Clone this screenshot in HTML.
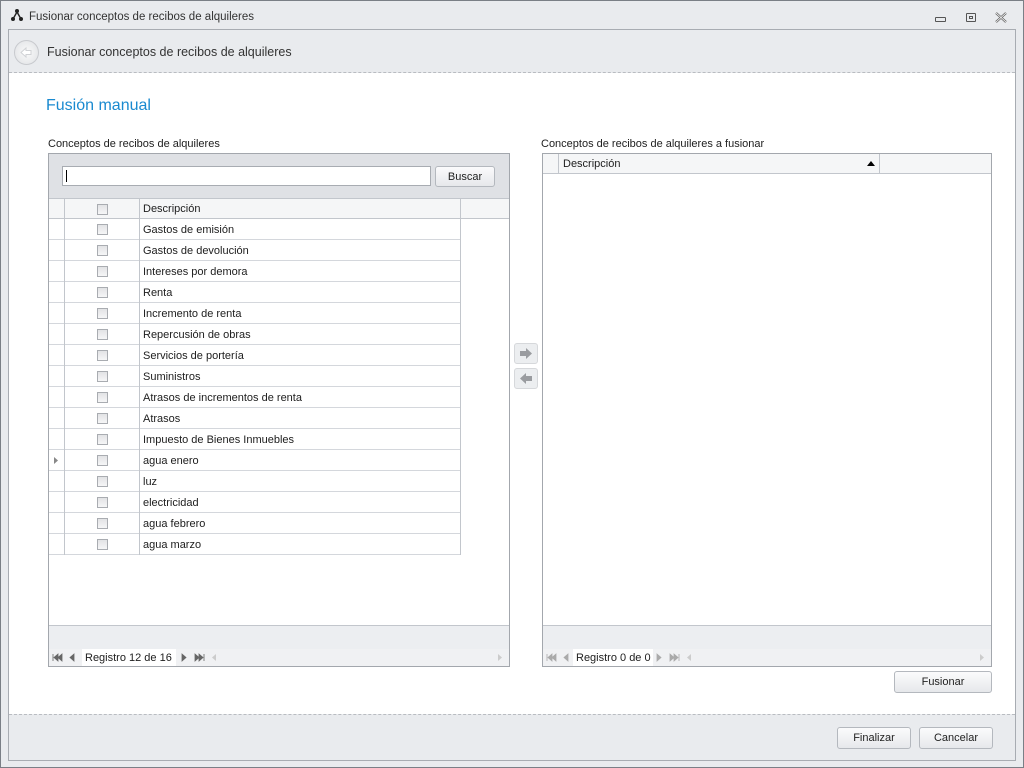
<!DOCTYPE html>
<html><head><meta charset="utf-8"><style>
*{box-sizing:border-box;margin:0;padding:0}
body{width:1024px;height:768px;background:#e9ebee;font-family:"Liberation Sans",sans-serif;font-size:11px;color:#202020;position:relative;overflow:hidden}
.abs{position:absolute}
.win{left:0;top:0;width:1024px;height:768px;border:1px solid #7a7f86}
.inner{left:8px;top:29px;width:1008px;height:732px;border:1px solid #a8acb2;background:#fff}
.btn{position:absolute;border:1px solid #b4b8be;border-radius:3px;background:linear-gradient(#fbfbfc,#e6e8eb);text-align:center;font-size:11px;line-height:20px;color:#222}
.cb{position:absolute;width:11px;height:11px;border:1px solid #a9acb1;background:linear-gradient(#e2e3e5,#f6f6f7)}
.row{position:absolute;left:0;height:21px;border-bottom:1px solid #d4d7dc;width:412px}
.vl{position:absolute;width:1px;background:#c2c6cc}
</style></head><body>
<div class="abs win"></div>
<svg class="abs" style="left:10px;top:8px" width="14" height="14" viewBox="0 0 14 14"><circle cx="7" cy="3" r="2" fill="#222"/><circle cx="3" cy="11" r="2" fill="#222"/><circle cx="11" cy="11" r="2" fill="#222"/><path d="M7 4 L3 11 M7 4 L11 11" stroke="#222" stroke-width="1.4"/></svg>
<div class="abs" style="left:29px;top:11px;font-size:11.5px;color:#333">Fusionar conceptos de recibos de alquileres</div>
<div class="abs" style="left:935px;top:17px;width:11px;height:5px;border:1px solid #555;border-radius:1px"></div>
<div class="abs" style="left:966px;top:13px;width:10px;height:9px;border:1px solid #555;border-radius:1px"><div style="margin:2px 2px;width:4px;height:3px;border:1px solid #555"></div></div>
<svg class="abs" style="left:995px;top:12px" width="12" height="11" viewBox="0 0 12 11"><path d="M1 1 L11 10 M11 1 L1 10" stroke="#666" stroke-width="2.2"/><path d="M1 1 L11 10 M11 1 L1 10" stroke="#fff" stroke-width="0.8"/></svg>
<div class="abs inner"></div>
<div class="abs" style="left:9px;top:30px;width:1006px;height:43px;background:#e9ebee;border-bottom:1px dashed #b9bcc1"></div>
<div class="abs" style="left:14px;top:40px;width:25px;height:25px;border-radius:50%;border:1px solid #c8cace;background:radial-gradient(#fafafa,#dfe1e4)"><svg width="23" height="23" viewBox="0 0 23 23"><path d="M6 11.5 L11 7 L11 9.5 L16 9.5 L16 13.5 L11 13.5 L11 16 Z" fill="#fff" stroke="#d0d2d5"/></svg></div>
<div class="abs" style="left:47px;top:45px;font-size:12.5px;color:#333">Fusionar conceptos de recibos de alquileres</div>
<div class="abs" style="left:46px;top:97px;font-size:16px;color:#1a8ad0">Fusión manual</div>
<div class="abs" style="left:48px;top:138px">Conceptos de recibos de alquileres</div>
<div class="abs" style="left:541px;top:138px">Conceptos de recibos de alquileres a fusionar</div>

<!-- left grid -->
<div class="abs" style="left:48px;top:153px;width:462px;height:514px;border:1px solid #a3a7ad;background:#fff;overflow:hidden">
 <div class="abs" style="left:0;top:0;width:460px;height:45px;background:#dfe1e5;border-bottom:1px solid #c2c6cc"></div>
 <div class="abs" style="left:13px;top:12px;width:369px;height:20px;border:1px solid #a8acb2;background:#fff"><div style="margin:3px 0 0 3px;width:1px;height:12px;background:#000"></div></div>
 <div class="btn" style="left:386px;top:12px;width:60px;height:21px">Buscar</div>
 <div class="abs" style="left:0;top:45px;width:460px;height:20px;background:#f5f6f7;border-bottom:1px solid #c2c6cc"></div>
 <div class="cb" style="left:48px;top:50px"></div>
 <div class="abs" style="left:94px;top:49px">Descripción</div>
 <div id="rows"></div>
 <div class="abs" style="left:0;top:471px;width:460px;height:24px;background:#eceef1;border-top:1px solid #c2c6cc"></div>
 <div class="abs" style="left:0;top:495px;width:460px;height:17px;background:#f0f1f3"></div>
 <svg class="abs" style="left:3px;top:499px" width="26" height="9"><path d="M1 1V8M6 1L2 4.5L6 8ZM10 1L6 4.5L10 8Z M22 1L18 4.5L22 8Z" fill="#666" stroke="#666" stroke-width="0.8"/></svg>
 <div class="abs" style="left:33px;top:495px;width:94px;height:17px;background:#fff"></div>
 <div class="abs" style="left:36px;top:498px">Registro 12 de 16</div>
 <svg class="abs" style="left:130px;top:499px" width="40" height="9"><path d="M3 1L7 4.5L3 8Z M16 1L20 4.5L16 8Z M20 1L24 4.5L20 8Z M25 1V8" fill="#666" stroke="#666" stroke-width="0.8"/><path d="M37 1L33 4.5L37 8Z" fill="#ccc"/></svg>
 <svg class="abs" style="left:447px;top:499px" width="8" height="9"><path d="M2 1L6 4.5L2 8Z" fill="#ccc"/></svg>
</div>

<!-- arrows -->
<div class="abs" style="left:514px;top:343px;width:24px;height:21px;border:1px solid #d6d8db;border-radius:3px;background:#eceef0"><svg width="22" height="19"><path d="M5 7 H11 V4 L17 9.5 L11 15 V12 H5 Z" fill="#9a9ca0"/></svg></div>
<div class="abs" style="left:514px;top:368px;width:24px;height:21px;border:1px solid #d6d8db;border-radius:3px;background:#eceef0"><svg width="22" height="19"><path d="M17 7 H11 V4 L5 9.5 L11 15 V12 H17 Z" fill="#9a9ca0"/></svg></div>

<!-- right grid -->
<div class="abs" style="left:542px;top:153px;width:450px;height:514px;border:1px solid #a3a7ad;background:#fff;overflow:hidden">
 <div class="abs" style="left:0;top:0;width:448px;height:20px;background:#f5f6f7;border-bottom:1px solid #c2c6cc"></div>
 <div class="vl" style="left:15px;top:0;height:20px"></div>
 <div class="vl" style="left:336px;top:0;height:20px"></div>
 <div class="abs" style="left:20px;top:4px">Descripción</div>
 <svg class="abs" style="left:324px;top:7px" width="8" height="5"><path d="M0 5L4 0L8 5Z" fill="#000"/></svg>
 <div class="abs" style="left:0;top:471px;width:448px;height:24px;background:#eceef1;border-top:1px solid #c2c6cc"></div>
 <div class="abs" style="left:0;top:495px;width:448px;height:17px;background:#f0f1f3"></div>
 <svg class="abs" style="left:3px;top:499px" width="26" height="9"><path d="M1 1V8M6 1L2 4.5L6 8ZM10 1L6 4.5L10 8Z M22 1L18 4.5L22 8Z" fill="#aaa" stroke="#aaa" stroke-width="0.8"/></svg>
 <div class="abs" style="left:30px;top:495px;width:80px;height:17px;background:#fff"></div>
 <div class="abs" style="left:33px;top:498px">Registro 0 de 0</div>
 <svg class="abs" style="left:111px;top:499px" width="40" height="9"><path d="M3 1L7 4.5L3 8Z M16 1L20 4.5L16 8Z M20 1L24 4.5L20 8Z M25 1V8" fill="#aaa" stroke="#aaa" stroke-width="0.8"/><path d="M37 1L33 4.5L37 8Z" fill="#ccc"/></svg>
 <svg class="abs" style="left:435px;top:499px" width="8" height="9"><path d="M2 1L6 4.5L2 8Z" fill="#ccc"/></svg>
</div>
<div class="btn" style="left:894px;top:671px;width:98px;height:22px">Fusionar</div>

<div class="abs" style="left:9px;top:714px;width:1006px;height:46px;background:#e9ebee;border-top:1px dashed #b9bcc1"></div>
<div class="btn" style="left:837px;top:727px;width:74px;height:22px">Finalizar</div>
<div class="btn" style="left:919px;top:727px;width:74px;height:22px">Cancelar</div>

<script>
var items=["Gastos de emisión","Gastos de devolución","Intereses por demora","Renta","Incremento de renta","Repercusión de obras","Servicios de portería","Suministros","Atrasos de incrementos de renta","Atrasos","Impuesto de Bienes Inmuebles","agua enero","luz","electricidad","agua febrero","agua marzo"];
var h="";
items.forEach(function(t,i){var y=65+i*21;
h+='<div class="row" style="top:'+y+'px"></div><div class="cb" style="left:48px;top:'+(y+5)+'px"></div><div class="abs" style="left:94px;top:'+(y+5)+'px">'+t+'</div>';
if(i==11)h+='<svg class="abs" style="left:5px;top:'+(y+7)+'px" width="5" height="7"><path d="M0 0L4 3.5L0 7Z" fill="#888"/></svg>';});
h+='<div class="vl" style="left:15px;top:45px;height:356px"></div><div class="vl" style="left:90px;top:45px;height:356px"></div><div class="vl" style="left:411px;top:45px;height:356px"></div>';
document.getElementById('rows').outerHTML=h;
</script>
</body></html>
